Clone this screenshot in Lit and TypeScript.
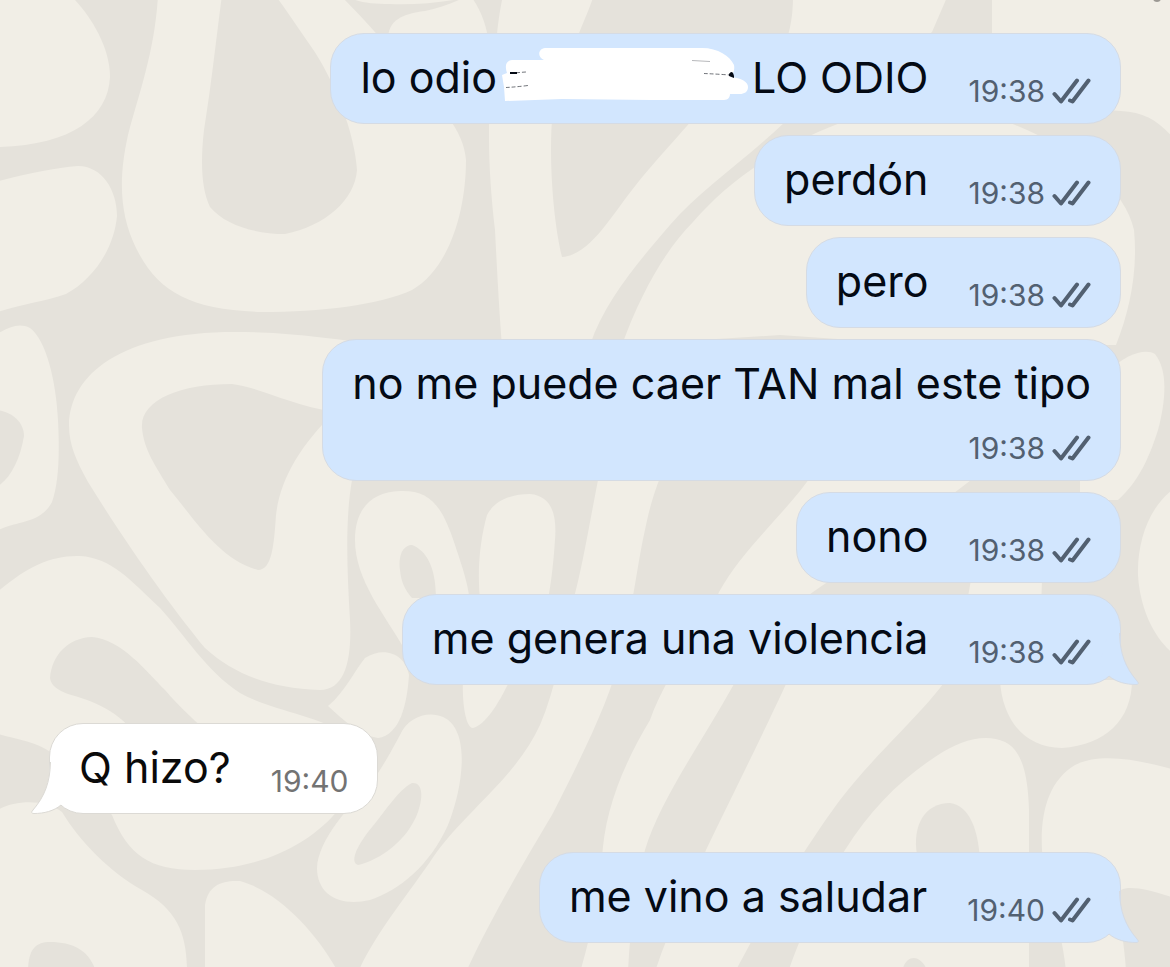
import { LitElement, html, css, svg, nothing } from "lit";
import { customElement, property } from "lit/decorators.js";

type Side = "out" | "in";

interface Message {
  side: Side;
  time: string;
  text: string;
  /** Text that follows a scribbled-out name. */
  after?: string;
  tail?: boolean;
  stacked?: boolean;
}

const messages: Message[] = [
  { side: "out", text: "lo odio", after: "LO ODIO", time: "19:38" },
  { side: "out", text: "perdón", time: "19:38" },
  { side: "out", text: "pero", time: "19:38" },
  { side: "out", text: "no me puede caer TAN mal este tipo", time: "19:38", stacked: true },
  { side: "out", text: "nono", time: "19:38" },
  { side: "out", text: "me genera una violencia", time: "19:38", tail: true },
  { side: "in", text: "Q hizo?", time: "19:40", tail: true },
  { side: "out", text: "me vino a saludar", time: "19:40", tail: true },
];

/** Pale shapes of the wallpaper. */
const pale = [
  "M-5-5H70C88 12 110 45 110 77C108 118 70 146 -5 147Z",
  "M-5 182C25 174 55 168 78 166C102 166 117 190 117 216C114 250 92 280 66 294C44 302 20 304 -5 313Z",
  "M158-5C155 50 140 90 128 135C118 180 120 215 136 248C158 292 190 310 262 312C320 312 380 305 412 290C450 268 466 210 466 160C464 130 440 105 400 60C375 32 360 15 340-5Z",
  "M345-5H478C450 2 420 5 390 4C370 4 355 2 345-5Z",
  "M388 40C388 20 402 14 425 11C440 8 455 2 470-5C480 8 487 25 489 45Z",
  "M503-5C498 20 497 32 495 60C486 110 488 170 495 230C498 290 500 320 502 345L590 345C605 300 640 260 670 225C700 190 745 160 785 122C850 90 900 60 932 32L948-5Z",
  "M992-5V32C992 70 1000 100 1121 111C1145 112 1160 122 1175 140V-5Z",
  "M622 345C640 295 665 250 693 222C725 185 770 150 840 123H1010C1080 150 1125 190 1134 230C1138 270 1130 310 1116 345H924L780 335Z",
  "M-5 335C8 328 18 322 30 328C46 340 56 380 58 420C60 460 58 485 52 502C40 525 15 520 -5 532Z",
  "M69 425C70 375 120 332 235 332C280 332 310 336 360 342L352 480C345 520 347 570 350 620C352 660 345 690 320 690C270 688 235 675 205 648C175 612 130 550 88 482C76 460 69 445 69 425Z",
  "M-5 594C25 568 50 555 80 556C112 558 130 580 160 608C185 635 205 670 240 693C270 710 315 715 350 735L340 808C310 845 260 870 195 870C150 870 128 855 112 815L60 760C40 740 15 740 -5 733Z",
  "M-5 812C10 800 45 798 62 812C80 842 110 872 142 890C178 910 187 935 187 972H-5Z",
  "M205 972V905C208 885 222 880 240 881C280 892 318 935 338 972Z",
  "M355 540C355 508 372 492 400 491C430 490 442 505 455 545C465 575 470 590 470 610L430 650H405C385 615 355 580 355 540Z",
  "M480 600C477 570 480 540 487 515C495 500 512 494 530 494C552 496 557 515 555 540C553 570 550 590 546 610Z",
  "M463 680C462 700 465 728 473 728C485 725 498 705 510 680Z",
  "M328 706C345 692 355 670 365 658C385 645 406 655 409 675C407 705 400 735 378 738C360 735 345 722 328 706Z",
  "M400 735C410 712 440 708 453 725C468 745 462 790 448 825C430 865 400 890 370 900C340 907 317 895 317 868C318 840 350 805 370 785C382 768 392 750 400 735Z",
  "M600 470C590 520 582 570 572 605C562 650 555 690 540 725C515 780 460 815 430 862C400 905 375 935 358 972H466C490 920 525 860 552 815C585 750 610 700 622 650C634 600 638 560 645 530C650 505 655 490 663 470Z",
  "M815 470C790 510 745 545 719 592C700 640 670 665 650 720C620 770 604 815 602 860C600 890 590 940 580 972H628C630 930 635 890 645 850C660 800 700 745 734 684C765 640 780 615 813 592C860 560 920 520 971 480V470Z",
  "M971 600C965 630 955 660 943 684C920 715 870 760 840 800C810 840 770 905 735 972H655C668 930 690 890 706 850C730 800 765 730 786 684L813 640Z",
  "M971 580H1042L1040 640H960Z",
  "M1000 680C1002 720 1025 748 1062 748C1105 745 1132 720 1132 680Z",
  "M788 972C805 925 825 880 845 850C870 810 900 780 935 757C960 740 985 733 1005 742C1022 750 1028 775 1029 810V972Z",
  "M1042 850C1040 810 1050 780 1075 765C1100 752 1140 760 1175 770V898C1150 890 1130 885 1121 890C1118 920 1125 945 1126 972H1066C1062 925 1045 890 1042 850Z",
  "M1175 488C1150 505 1137 540 1138 575C1140 610 1155 640 1175 655Z",
  "M1110 370C1125 355 1145 348 1155 354C1168 370 1166 400 1158 430C1150 455 1140 480 1118 500H1080V400Z",
];

/** Darker hollows cut in the pale shapes. */
const hollow = [
  "M222-5C216 40 212 80 204 130C200 165 202 190 210 207C225 225 255 234 285 234C325 226 355 200 357 170C355 135 335 80 310 45C298 28 290 15 275-5Z",
  "M594-5C582 30 560 70 552 120C549 160 553 220 562 257C590 255 612 215 632 190C655 160 685 130 700 110L785 45C792 25 793 10 793-5Z",
  "M-5 410C8 410 24 420 24 436C20 460 10 480 -5 488Z",
  "M142 428C140 400 180 384 232 384C262 388 290 405 335 412C300 445 280 480 276 515C274 545 272 570 258 570C220 560 195 520 170 490C155 465 144 450 142 428Z",
  "M50 678C52 655 68 638 92 637C122 640 145 670 165 690C180 708 195 720 215 740H140C120 710 90 700 68 694C58 690 51 686 50 678Z",
  "M28 972C28 950 35 942 50 942C75 942 90 952 96 972Z",
  "M400 570C398 552 405 545 412 545C425 550 436 565 436 598H412C405 590 401 582 400 570Z",
  "M412 783C422 782 424 795 418 812C408 840 380 860 358 865C350 862 356 848 368 832C385 812 398 790 412 783Z",
  "M917 855C912 825 925 803 950 803C970 806 978 830 980 860Z",
  "M902 972C905 955 920 952 928 972Z",
];

@customElement("chat-wallpaper")
class ChatWallpaper extends LitElement {
  static styles = css`
    :host { display: block; }
    .art { display: block; width: 100%; height: 100%; background: #e5e2db; }
    .pale { fill: #f1eee6; }
    .hollow { fill: #e5e2db; }
    .speck { fill: #9b9893; }
  `;
  render() {
    return html`<svg class="art" viewBox="0 0 1170 967" preserveAspectRatio="xMidYMid slice" aria-hidden="true">
      ${pale.map((d) => svg`<path class="pale" d=${d}></path>`)}
      ${hollow.map((d) => svg`<path class="hollow" d=${d}></path>`)}
      <circle class="speck" cx="1157" cy="-2" r="4"></circle>
    </svg>`;
  }
}

@customElement("chat-message")
class ChatMessage extends LitElement {
  @property({ attribute: false }) message!: Message;

  static styles = css`
    :host { display: flex; }
    .bubble {
      position: relative;
      display: flex;
      align-items: flex-start;
      gap: 40px;
      box-sizing: border-box;
      max-width: 100%;
      padding: 15px 29px 14px;
      border: 1px solid #d5dbe4;
      border-radius: 34px;
      background: #d2e6fe;
      color: #040a14;
    }
    .out { margin-left: auto; }
    .in { background: #fff; border-color: #dcdad5; color: #0a0a0a; }
    .stacked { flex-direction: column; align-items: flex-end; gap: 19px; }
    .text { margin: 0; font-size: 43px; line-height: 56px; padding-bottom: 4px; }
    .stacked .text { padding-bottom: 0; }
    .meta {
      display: flex;
      align-items: center;
      align-self: flex-end;
      gap: 7px;
      font-size: 30px;
      line-height: 36px;
      color: #526071;
    }
    .in .meta { color: #737373; }
    .ticks { width: 39px; height: 26px; fill: none; stroke: currentColor; stroke-width: 4; stroke-linecap: round; stroke-linejoin: round; }
    .scribble { width: 246px; height: 54px; margin: -4px 4px -4px 5px; vertical-align: -4px; }
    .paint { fill: #fff; }
    .ink { fill: none; stroke: #10151f; stroke-width: 1; }
    .blot { fill: #040a14; }
    .tail { position: absolute; bottom: -1px; width: 40px; height: 52px; }
    .out .tail { right: -20px; }
    .in .tail { left: -20px; transform: scaleX(-1); }
    .tail-fill { fill: #d2e6fe; }
    .tail-edge { fill: none; stroke: #d5dbe4; stroke-width: 1; }
    .in .tail-fill { fill: #fff; }
    .in .tail-edge { stroke: #dcdad5; }
  `;

  private scribble() {
    return html`<svg class="scribble" viewBox="500 46 246 54" role="img" aria-label="nombre tachado">
      <path class="paint" d="M543 47H700C716 47 728 55 732 64C733 70 731 73 728 76C740 77 746 81 746 86C746 91 742 93 738 93H728C728 96 726 99 722 99H650L560 98L503 100L502 86L500 74L505 72C503 66 503 60 510 59H542C535 56 536 48 543 47Z"></path>
      <path class="ink" d="M508 72.500Q516 71.500 524 71M504 86.500Q514 86 526 84.500M702 72.500Q714 73 728 74" stroke-dasharray="4 2" stroke-opacity="0.6"></path>
      <path class="ink" d="M690 59.500L708 60.500" stroke-opacity="0.3"></path>
      <path class="blot" d="M508 71H515V73H508ZM727 73C729 70 731 70 732 75V77L727 75Z"></path>
    </svg>`;
  }

  private tail() {
    return html`<svg class="tail" viewBox="0 0 40 52" aria-hidden="true">
      <path class="tail-fill" d="M20 0C20 20 25 34 37 48Q40 51.500 36 51.500C26 51.500 16 49 9 43L0 30L8 0Z"></path>
      <path class="tail-edge" d="M19.500 0C20 20 25 34 37 48Q40 51.500 36 51.500C26 51.500 16 49 9 43"></path>
    </svg>`;
  }

  render() {
    const m = this.message;
    return html`<div class="bubble ${m.side} ${m.stacked ? "stacked" : ""}">
      ${m.tail ? this.tail() : nothing}
      <p class="text">${m.text}${m.after ? html`${this.scribble()}${m.after}` : nothing}</p>
      <span class="meta">
        <time>${m.time}</time>
        ${m.side === "out"
          ? html`<svg class="ticks" viewBox="0 0 39 26" role="img" aria-label="Entregado">
              <path d="M2.500 16L9 23.500L25 2.500M18 22.500L20.500 23.500L36.500 2.500"></path>
            </svg>`
          : nothing}
      </span>
    </div>`;
  }
}

@customElement("app-root")
class AppRoot extends LitElement {
  static styles = css`
    :host {
      position: relative;
      display: block;
      min-height: 100vh;
      overflow: hidden;
      font-family: Inter, "Liberation Sans", sans-serif;
    }
    .wallpaper { position: absolute; inset: 0; }
    .thread {
      position: relative;
      display: flex;
      flex-direction: column;
      gap: 11px;
      margin: 0;
      padding: 33px 49px 24px;
      list-style: none;
    }
    .turn { margin-top: 27px; }
  `;
  render() {
    return html`
      <chat-wallpaper class="wallpaper"></chat-wallpaper>
      <ul class="thread">
        ${messages.map((m, i) => html`<li class=${i > 0 && messages[i - 1].side !== m.side ? "turn" : ""}>
          <chat-message .message=${m}></chat-message>
        </li>`)}
      </ul>
    `;
  }
}
